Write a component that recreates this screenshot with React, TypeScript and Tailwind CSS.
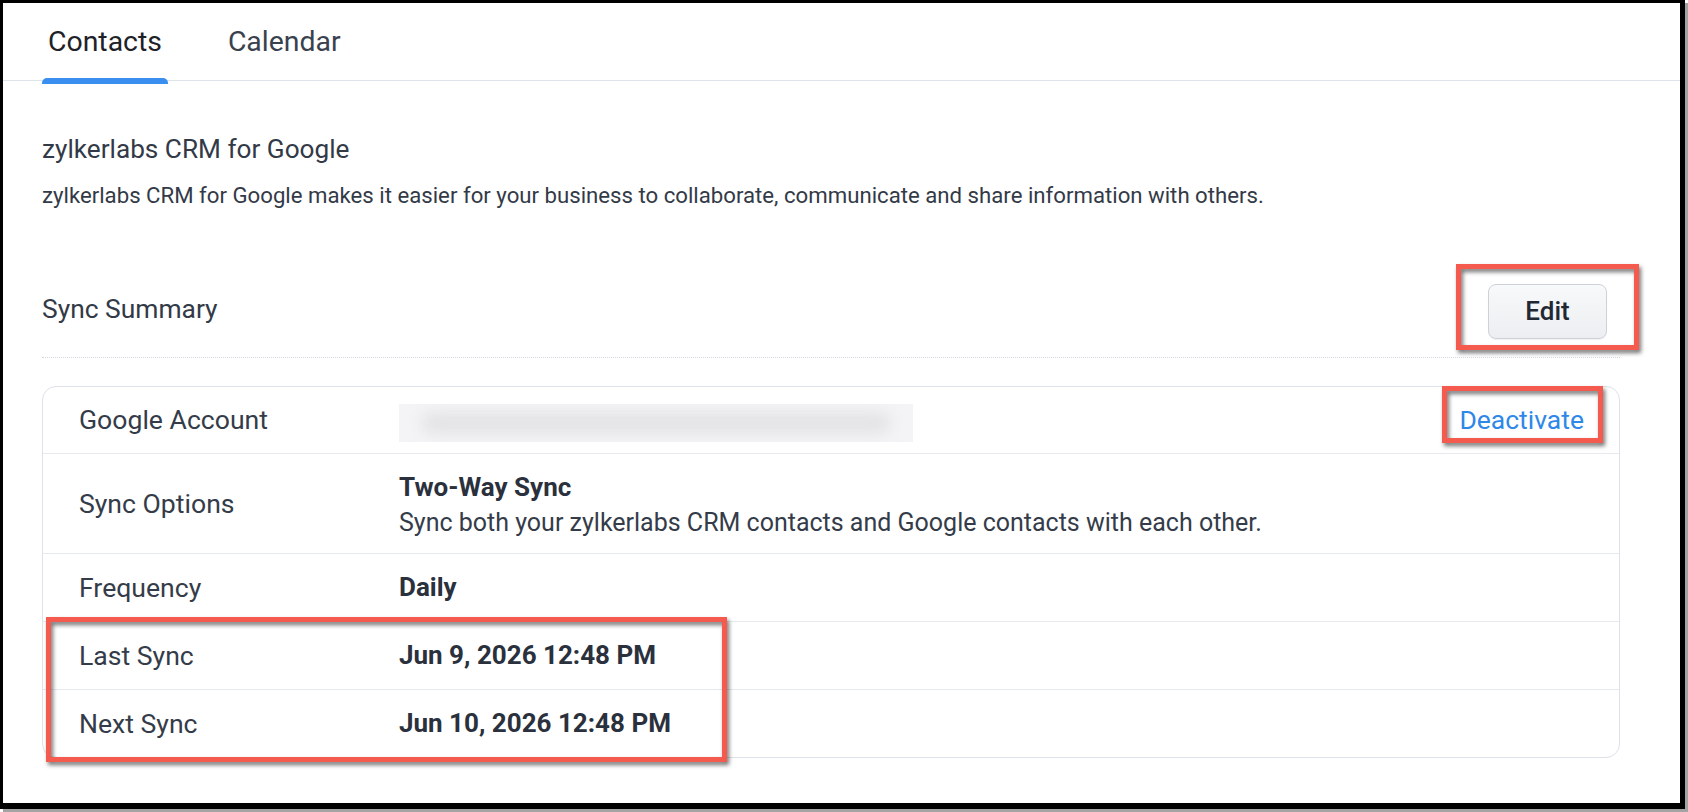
import React from "react";

const FONT = { fontFamily: "Roboto, 'Noto Sans', sans-serif" };

type Row = {
  label: string;
  height: string;
  value: React.ReactNode;
};

function BlurredAccount() {
  return (
    <div className="mt-[6px] w-[514px] h-[38px] bg-[#f4f4f6] overflow-hidden flex items-center justify-center">
      <div className="w-[470px] h-[22px] rounded-full bg-[#e4e4e6] blur-[7px]" />
    </div>
  );
}

export default function App() {
  const rows: Row[] = [
    {
      label: "Google Account",
      height: "h-[67px]",
      value: (
        <div className="flex items-center justify-between pr-[35px]">
          <BlurredAccount />
          <a className="text-[26.5px] text-[#2f87e8] cursor-pointer">Deactivate</a>
        </div>
      ),
    },
    {
      label: "Sync Options",
      height: "h-[100px]",
      value: (
        <div className="mt-[2px] leading-[35px]">
          <div className="text-[26px] font-bold text-[#2a313d]">Two-Way Sync</div>
          <div className="text-[25px] text-[#353c49]">
            Sync both your zylkerlabs CRM contacts and Google contacts with each other.
          </div>
        </div>
      ),
    },
    {
      label: "Frequency",
      height: "h-[68px]",
      value: <div className="text-[26px] font-bold text-[#2a313d]">Daily</div>,
    },
    {
      label: "Last Sync",
      height: "h-[68px]",
      value: <div className="text-[26px] font-bold text-[#2a313d]">Jun 9, 2026 12:48 PM</div>,
    },
    {
      label: "Next Sync",
      height: "h-[67px]",
      value: <div className="text-[26px] font-bold text-[#2a313d]">Jun 10, 2026 12:48 PM</div>,
    },
  ];

  return (
    <div className="relative w-[1688px] h-[812px] bg-white overflow-hidden" style={FONT}>
      <div className="w-[1685px] h-[809px] border-l-[3px] border-t-[3px] border-r-[5px] border-b-[6px] border-black bg-white shadow-[3px_3px_0_#a3a3a3]">
        {/* tab bar */}
        <div className="flex h-[78px] border-b border-[#dde3ea] pl-[39px] gap-[54px]">
          <div className="relative h-[79px] px-[6px] flex items-center text-[28.4px] text-[#1e2228]">
            Contacts
            <span className="absolute left-0 right-0 bottom-[-2px] h-[6px] rounded-t-[5px] bg-[#3a8ef0]" />
          </div>
          <div className="h-[79px] px-[6px] flex items-center text-[28.4px] text-[#3a414e]">Calendar</div>
        </div>

        <div className="pl-[39px] w-[1617px]">
          {/* intro */}
          <div className="mt-[45px] leading-[46px] text-[#333a47]">
            <p className="text-[26.2px]">zylkerlabs CRM for Google</p>
            <p className="text-[22.2px]">
              zylkerlabs CRM for Google makes it easier for your business to collaborate, communicate and
              share information with others.
            </p>
          </div>

          {/* summary header */}
          <div className="mt-[44px] h-[96px] flex items-center justify-between border-b border-dotted border-[#d3d8de]">
            <span className="text-[26.4px] text-[#333a47]">Sync Summary</span>
            <button className="mr-[13px] mt-[3px] w-[119px] h-[55px] rounded-[8px] border border-[#cdd2d9] bg-gradient-to-b from-[#f8f9fa] to-[#eceef1] text-[26px] font-medium text-[#222833] shadow-[0_1px_1px_rgba(0,0,0,0.06)]">
              Edit
            </button>
          </div>

          {/* summary card */}
          <div className="mt-[28px] border border-[#dde2e8] rounded-[14px] divide-y divide-[#e6e9ee]">
            {rows.map((r) => (
              <div
                key={r.label}
                className={`${r.height} grid grid-cols-[320px_1fr] items-center pl-[36px]`}
              >
                <span className="text-[26.6px] text-[#353c49]">{r.label}</span>
                {r.value}
              </div>
            ))}
          </div>
        </div>
      </div>

      {/* annotation callouts */}
      <div className="absolute left-[1456px] top-[264px] w-[183px] h-[86px] border-[5px] border-[#f55a4e] [filter:drop-shadow(2px_3px_2px_rgba(0,0,0,0.55))]" />
      <div className="absolute left-[1442px] top-[386px] w-[161px] h-[57px] border-[5px] border-[#f55a4e] [filter:drop-shadow(2px_3px_2px_rgba(0,0,0,0.55))]" />
      <div className="absolute left-[46px] top-[617px] w-[681px] h-[145px] border-[5px] border-[#f55a4e] [filter:drop-shadow(2px_3px_2px_rgba(0,0,0,0.55))]" />
    </div>
  );
}
